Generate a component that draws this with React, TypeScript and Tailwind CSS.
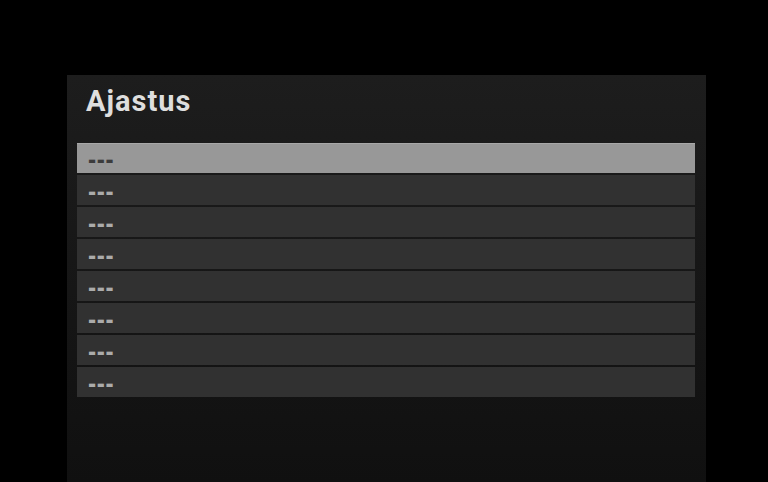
import React from "react";

export default function App() {
  const rows = Array.from({ length: 8 });
  return (
    <div className="w-[768px] h-[482px] bg-black overflow-hidden pt-[75px] pl-[67px]" style={{ fontFamily: "Roboto, 'Liberation Sans', sans-serif" }}>
      <div className="w-[639px] h-[407px] bg-gradient-to-b from-[#1d1d1d] to-[#101010] pt-[8px] pl-[10px] pr-[11px]">
        <div className="h-[60px] pl-[9px] text-[29px] font-bold text-[#dedede] leading-[36px] tracking-[1px]">Ajastus</div>
        <div className="flex flex-col gap-[2px]">
          {rows.map((_, i) => (
            <div
              key={i}
              className={
                "h-[30px] flex items-center pl-[11px] pt-[3px] " +
                (i === 0 ? "bg-[#989898] text-[#3c3c3c] border-t border-[#a8a8a8]" : "bg-[#313131] text-[#ababab]")
              }
            >
              <span className="inline-block origin-left scale-x-[1.35] scale-y-[1.5] text-[18px] font-bold leading-none tracking-[0.5px]" style={{ fontFamily: "'Liberation Sans', sans-serif" }}>
                ---
              </span>
            </div>
          ))}
        </div>
      </div>
    </div>
  );
}
